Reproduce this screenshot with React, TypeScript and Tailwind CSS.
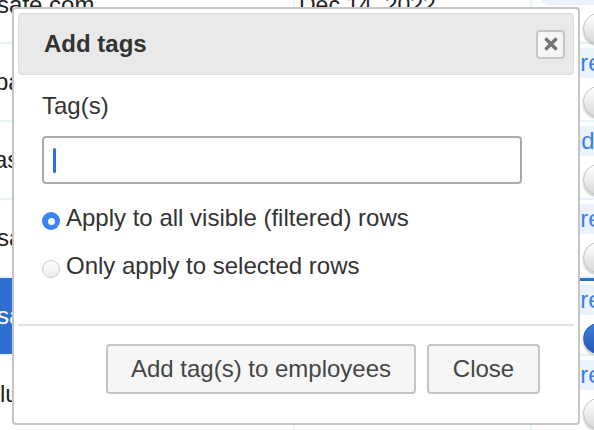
import React from 'react';

const rows = [
  { name: 'safe.com', nameOffset: '-ml-[3px]', date: 'Dec 14, 2022', link: 'More', linkPad: 'pl-[6px]', selected: false },
  { name: 'pat.kim@acme.com', nameOffset: '-ml-[5px]', date: 'Nov 30, 2022', link: 'More', linkPad: 'pl-[6px]', selected: false },
  { name: 'asha.r@acme.com', nameOffset: '-ml-[6px]', date: 'Nov 28, 2022', link: 'Add', linkPad: 'pl-[11px]', selected: false },
  { name: 'sam.lee@acme.com', nameOffset: '-ml-[3px]', date: 'Nov 21, 2022', link: 'More', linkPad: 'pl-[6px]', selected: false },
  { name: 'sara.n@acme.com', nameOffset: '-ml-[3px]', date: 'Nov 17, 2022', link: 'More', linkPad: 'pl-[6px]', selected: true },
  { name: 'luis.g@acme.com', nameOffset: 'ml-0', date: 'Nov 09, 2022', link: 'More', linkPad: 'pl-[6px]', selected: false },
];

function Radio({ checked }: { checked: boolean }) {
  if (checked) {
    return (
      <span className="mt-[8px] flex h-[18px] w-[18px] shrink-0 items-center justify-center rounded-full bg-[#3a84f7]">
        <span className="h-[7px] w-[7px] rounded-full bg-white" />
      </span>
    );
  }
  return (
    <span className="mt-[8px] h-[18px] w-[18px] shrink-0 rounded-full border border-[#cdcdcd] bg-gradient-to-b from-[#fdfdfd] to-[#eeeeee]" />
  );
}

export default function App() {
  return (
    <div className="relative h-[430px] w-[594px] overflow-hidden bg-white font-['Liberation_Sans',Arial,sans-serif] text-[24px]">
      {/* table behind the dialog */}
      <div className="-mt-[34px]">
        {rows.map((row, i) => (
          <div
            key={i}
            className={`grid h-[78px] grid-cols-[293px_237px_1fr] border-b-2 border-[#e3f5f8] ${
              row.selected ? 'bg-[#2f6fd2]' : 'bg-white'
            }`}
          >
            <div className="flex items-center overflow-hidden">
              <span className={`whitespace-nowrap ${row.nameOffset} ${row.selected ? 'text-white' : 'text-[#222]'}`}>
                {row.name}
              </span>
            </div>
            <div className="flex items-center border-l-2 border-[#e3f5f8] pl-[4px]">
              <span className={`whitespace-nowrap text-[23px] ${row.selected ? 'text-white' : 'text-[#222]'}`}>{row.date}</span>
            </div>
            <div
              className={`flex flex-col gap-[8px] border-l-2 border-[#e3f5f8] pl-[9px] ${
                i === 0 ? 'pt-[9px]' : 'pt-[4px]'
              } ${row.selected ? 'border-t-[3px] border-t-[#2f6fd2] bg-white' : ''}`}
            >
              <div className={`flex h-[30px] items-center whitespace-nowrap rounded-[8px] bg-[#eaf2fd] ${row.linkPad} leading-none text-[#3b82e6]`}>
                {row.link}
              </div>
              <div
                className={`ml-[42px] h-[31px] w-[80px] rounded-full border shadow-[0_2px_2px_rgba(0,0,0,0.25)] ${
                  row.selected
                    ? 'border-[#2a5db5] bg-gradient-to-b from-[#3d7ede] to-[#2458b8]'
                    : 'border-[#c4c4c4] bg-gradient-to-b from-white to-[#d9d9d9]'
                }`}
              />
            </div>
          </div>
        ))}
      </div>

      {/* dialog */}
      <div className="absolute left-[12px] top-[7px] flex h-[418px] w-[568px] flex-col rounded-[4px] border-2 border-[#c6c6c6] bg-white p-[4px] text-[#333]">
        <div className="flex h-[62px] items-center justify-between rounded-[4px] border border-[#dddddd] bg-[#e9e9e9] pl-[25px] pr-[8px]">
          <span className="font-bold">Add tags</span>
          <button className="flex h-[29px] w-[29px] items-center justify-center rounded-[4px] border-2 border-[#c5c5c5] bg-[#f6f6f6]">
            <svg width="14" height="14" viewBox="0 0 14 14">
              <path d="M2.5 2.5 L11.5 11.5 M11.5 2.5 L2.5 11.5" stroke="#777" strokeWidth="3.6" strokeLinecap="round" />
            </svg>
          </button>
        </div>

        <div className="flex flex-1 flex-col px-[24px] pt-[17px]">
          <label className="leading-[28px]">Tag(s)</label>
          <div className="mt-[16px] flex h-[48px] w-[480px] items-center rounded-[4px] border-2 border-[#aaaaaa] pl-[9px]">
            <span className="h-[25px] w-[3px] rounded-[2px] bg-[#2b6fe6]" />
          </div>
          <div className="mt-[20px] flex h-[28px] items-start gap-[6px]">
            <Radio checked />
            <span className="leading-[28px]">Apply to all visible (filtered) rows</span>
          </div>
          <div className="mt-[20px] flex h-[28px] items-start gap-[6px]">
            <Radio checked={false} />
            <span className="leading-[28px]">Only apply to selected rows</span>
          </div>
        </div>

        <div className="flex justify-end gap-[11px] border-t-2 border-[#e2e2e2] pb-[25px] pr-[34px] pt-[18px]">
          <button className="h-[50px] w-[310px] rounded-[4px] border-2 border-[#c5c5c5] bg-[#f6f6f6] text-[#454545]">
            Add tag(s) to employees
          </button>
          <button className="h-[50px] w-[113px] rounded-[4px] border-2 border-[#c5c5c5] bg-[#f6f6f6] text-[#454545]">
            Close
          </button>
        </div>
      </div>
    </div>
  );
}
